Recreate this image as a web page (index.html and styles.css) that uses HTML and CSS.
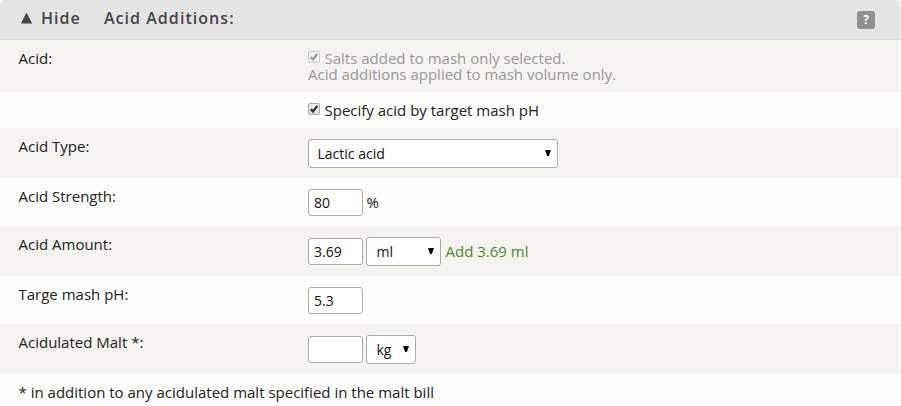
FILE: index.html
```html
<!DOCTYPE html>
<html lang="en">
<head>
  <meta charset="UTF-8">
  <title>Acid Additions</title>
  <link rel="stylesheet" href="styles.css">
</head>
<body>

  <div class="panel">
    <div class="panel-header">
      <svg class="toggle-arrow" width="12" height="12" viewBox="0 0 12 12"><path d="M5.5 0.5L11.2 11.5H0z" fill="#444"/></svg>
      <span class="toggle">Hide</span>
      <span class="title">Acid Additions:</span>
      <span class="help">?</span>
    </div>

    <div class="row">
      <div class="label">Acid:</div>
      <div class="field disabled">
        <label class="check-line">
          <span class="checkbox"><input type="checkbox" checked disabled><svg viewBox="0 0 12 12"><path d="M2.8 6.2L5 8.5L9.3 2.8" /></svg></span>
          Salts added to mash only selected.
        </label>
        <div>Acid additions applied to mash volume only.</div>
      </div>
    </div>

    <div class="row">
      <div class="label"></div>
      <div class="field">
        <label class="check-line">
          <span class="checkbox"><input type="checkbox" checked><svg viewBox="0 0 12 12"><path d="M2.8 6.2L5 8.5L9.3 2.8" /></svg></span>
          Specify acid by target mash pH
        </label>
      </div>
    </div>

    <div class="row">
      <div class="label">Acid Type:</div>
      <div class="field controls">
        <span class="select-box type">
          <select><option>Lactic acid</option></select>
          <svg class="arrow" width="6" height="6" viewBox="0 0 6 6"><path d="M0 0H6L3.8 6H2.2z"/></svg>
        </span>
      </div>
    </div>

    <div class="row">
      <div class="label">Acid Strength:</div>
      <div class="field controls">
        <input class="number" type="text" value="80">
        <span class="unit">%</span>
      </div>
    </div>

    <div class="row">
      <div class="label">Acid Amount:</div>
      <div class="field controls">
        <input class="number" type="text" value="3.69">
        <span class="select-box volume">
          <select><option>ml</option></select>
          <svg class="arrow" width="6" height="6" viewBox="0 0 6 6"><path d="M0 0H6L3.8 6H2.2z"/></svg>
        </span>
        <a class="add" href="#">Add 3.69 ml</a>
      </div>
    </div>

    <div class="row">
      <div class="label">Targe mash pH:</div>
      <div class="field controls">
        <input class="number" type="text" value="5.3">
      </div>
    </div>

    <div class="row">
      <div class="label">Acidulated Malt *:</div>
      <div class="field controls">
        <input class="number" type="text" value="">
        <span class="select-box weight">
          <select><option>kg</option></select>
          <svg class="arrow" width="6" height="6" viewBox="0 0 6 6"><path d="M0 0H6L3.8 6H2.2z"/></svg>
        </span>
      </div>
    </div>

    <div class="row note">* in addition to any acidulated malt specified in the malt bill</div>
  </div>

</body>
</html>
```
FILE: styles.css
```css
* {
  box-sizing: border-box;
}

body {
  margin: 0;
  background: #fff;
  color: #222;
  font-family: "Open Sans", sans-serif;
  font-size: 15px;
  line-height: 16px;
}

.panel {
  width: 900px;
  height: 406px;
  overflow: hidden;
  background: #fdfdfb;
  border-radius: 5px 5px 0 0;
}

.panel-header {
  display: flex;
  align-items: center;
  height: 40px;
  padding: 0 25px 3px 21px;
  background: #e4e4e4;
  border-bottom: 1px solid #d8d8d8;
  color: #444;
  font-size: 16px;
  font-weight: 600;
  letter-spacing: 1.05px;
}

.toggle {
  margin-left: 8px;
}

.title {
  margin-left: 23px;
}

.help {
  width: 18px;
  height: 18px;
  margin: 3px 0 0 auto;
  border-radius: 3px;
  background: #909090;
  color: #fff;
  font-size: 12px;
  font-weight: 700;
  line-height: 17px;
  letter-spacing: 0;
  text-align: center;
}

.row {
  display: flex;
  padding: 10px 18px 10px 18.5px;
}

.row:nth-child(even) {
  background: #f4f3f0;
}

.label {
  width: 289.5px;
}

.field {
  padding-top: 1px;
}

.disabled,
.row:nth-child(3) .field {
  padding-top: 0;
}

.disabled {
  color: #999;
}

.check-line {
  display: flex;
  height: 16px;
}

.checkbox {
  position: relative;
  width: 12px;
  height: 12px;
  margin: 1px 4.5px 0 0;
}

.checkbox input {
  appearance: none;
  display: block;
  width: 12px;
  height: 12px;
  margin: 0;
  border: 1px solid #aaa;
  border-radius: 2px;
  background: linear-gradient(#eee, #ddd);
}

.checkbox input:disabled {
  border-color: #ccc;
  background: #f0f0ef;
}

.checkbox svg {
  position: absolute;
  top: 0;
  left: 0;
  width: 12px;
  height: 12px;
  fill: none;
  stroke: #333;
  stroke-width: 2.2;
}

.disabled .checkbox svg {
  stroke: #999;
}

.controls {
  display: flex;
  align-items: center;
}

.number,
select {
  border: 1px solid #aaa;
  border-radius: 3px;
  background: #fff;
  color: #111;
  font-family: "Open Sans", sans-serif;
  font-size: 14px;
}

.number {
  width: 55px;
  height: 27px;
  padding: 0 5px 1px;
  margin-right: 3px;
}

.select-box {
  position: relative;
  height: 29px;
}

select {
  appearance: none;
  width: 100%;
  height: 29px;
  padding: 0 8.5px;
}

.type {
  width: 250px;
}

.volume {
  width: 75px;
}

.volume select,
.weight select {
  padding-left: 9.5px;
}

.weight {
  width: 50px;
}

.arrow {
  position: absolute;
  top: 11px;
  right: 7px;
}

.unit {
  margin-left: 0.5px;
  padding-bottom: 2px;
}

.add {
  margin-left: 4.5px;
  padding-bottom: 2px;
  color: #4b8b1d;
  text-decoration: none;
}
```
